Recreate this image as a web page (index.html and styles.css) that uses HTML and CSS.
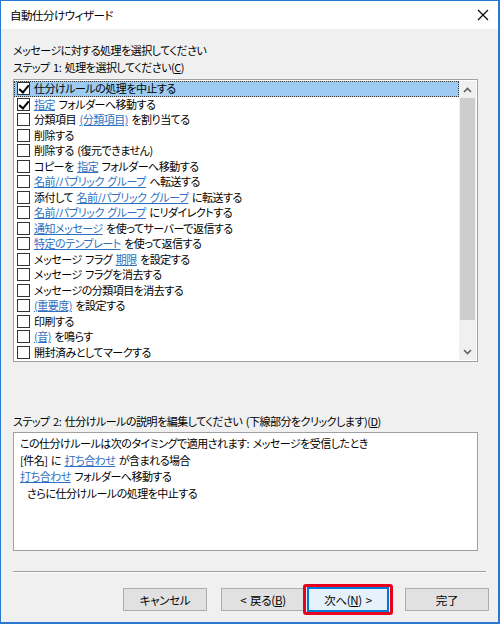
FILE: index.html
```html
<!DOCTYPE html>
<html lang="ja">
<head>
<meta charset="utf-8">
<link rel="stylesheet" href="styles.css">
</head>
<body>
<div class="window">
  <div class="titlebar">
    <span class="title">自動仕分けウィザード</span>
    <svg class="close" width="12" height="12" viewBox="0 0 12 12"><path d="M1 1L11 11M11 1L1 11" stroke="#000" stroke-width="1.1" fill="none"/></svg>
  </div>
  <div class="content">
    <div class="label l1">メッセージに対する処理を選択してください</div>
    <div class="label">ステップ 1: 処理を選択してください(<u>C</u>)</div>
    <div class="listbox">
      <ul class="items">
        <li class="item selected"><span class="cb checked"></span><span>仕分けルールの処理を中止する</span></li>
        <li class="item"><span class="cb checked"></span><span><a>指定</a> フォルダーへ移動する</span></li>
        <li class="item"><span class="cb"></span><span>分類項目 <a>(分類項目)</a> を割り当てる</span></li>
        <li class="item"><span class="cb"></span><span>削除する</span></li>
        <li class="item"><span class="cb"></span><span>削除する (復元できません)</span></li>
        <li class="item"><span class="cb"></span><span>コピーを <a>指定</a> フォルダーへ移動する</span></li>
        <li class="item"><span class="cb"></span><span><a>名前/パブリック グループ</a> へ転送する</span></li>
        <li class="item"><span class="cb"></span><span>添付して <a>名前/パブリック グループ</a> に転送する</span></li>
        <li class="item"><span class="cb"></span><span><a>名前/パブリック グループ</a> にリダイレクトする</span></li>
        <li class="item"><span class="cb"></span><span><a>通知メッセージ</a> を使ってサーバーで返信する</span></li>
        <li class="item"><span class="cb"></span><span><a>特定のテンプレート</a> を使って返信する</span></li>
        <li class="item"><span class="cb"></span><span>メッセージ フラグ <a>期限</a> を設定する</span></li>
        <li class="item"><span class="cb"></span><span>メッセージ フラグを消去する</span></li>
        <li class="item"><span class="cb"></span><span>メッセージの分類項目を消去する</span></li>
        <li class="item"><span class="cb"></span><span><a>(重要度)</a> を設定する</span></li>
        <li class="item"><span class="cb"></span><span>印刷する</span></li>
        <li class="item"><span class="cb"></span><span><a>(音)</a> を鳴らす</span></li>
        <li class="item"><span class="cb"></span><span>開封済みとしてマークする</span></li>
      </ul>
      <div class="scrollbar">
        <div class="arrow">
          <svg width="9" height="6" viewBox="0 0 9 6"><path d="M1 5L4.5 1.5L8 5" stroke="#606060" stroke-width="1.6" fill="none"/></svg>
        </div>
        <div class="thumb"></div>
        <div class="track"></div>
        <div class="arrow">
          <svg width="9" height="6" viewBox="0 0 9 6"><path d="M1 1L4.5 4.5L8 1" stroke="#606060" stroke-width="1.6" fill="none"/></svg>
        </div>
      </div>
    </div>
    <div class="label l3">ステップ 2: 仕分けルールの説明を編集してください (下線部分をクリックします)(<u>D</u>)</div>
    <div class="descbox">
      <div class="dline">この仕分けルールは次のタイミングで適用されます: メッセージを受信したとき</div>
      <div class="dline">[件名] に <a>打ち合わせ</a> が含まれる場合</div>
      <div class="dline"><a>打ち合わせ</a> フォルダーへ移動する</div>
      <div class="dline indent">さらに仕分けルールの処理を中止する</div>
    </div>
    <div class="separator"></div>
    <div class="buttons">
      <button class="btn">キャンセル</button>
      <button class="btn">&lt; 戻る(<u>B</u>)</button>
      <span class="highlight"><button class="btn focused">次へ(<u>N</u>) &gt;</button></span>
      <button class="btn">完了</button>
    </div>
  </div>
</div>
</body>
</html>
```
FILE: styles.css
```css
* { box-sizing: border-box; }
html, body { margin: 0; padding: 0; }
body {
  width: 500px;
  height: 624px;
  font-family: "Noto Sans CJK JP", "Noto Sans", sans-serif;
  font-size: 11px;
  letter-spacing: -0.5px;
  word-spacing: 1.5px;
  font-feature-settings: "palt";
  color: #000;
}
.window {
  width: 500px;
  height: 624px;
  border: 1px solid #2b78cf;
  border-right-width: 2px;
  border-bottom-width: 2px;
  background: #f0f0f0;
  display: flex;
  flex-direction: column;
}
.titlebar {
  height: 28px;
  background: #fff;
  display: flex;
  align-items: center;
  justify-content: space-between;
  padding: 0 9px 0 9px;
}
.title { font-size: 11.5px; line-height: 16px; }
.content {
  padding: 0 0 0 12px;
  display: flex;
  flex-direction: column;
}
.label { line-height: 17px; height: 17px; white-space: nowrap; }
.l1 { margin-top: 13px; }
.l3 { margin-top: 49px; height: 21px; line-height: 21px; }
u { text-decoration: underline; text-underline-offset: 1px; }
a { color: #2f6fc0; text-decoration: underline; text-underline-offset: 1px; text-decoration-color: #2f6fc0; }
.listbox {
  margin-top: 3px;
  width: 465px;
  height: 283px;
  border: 1px solid #a0a0a0;
  background: #fff;
  display: flex;
  padding: 1px 1px 1px 0;
}
.items {
  list-style: none;
  margin: 0;
  padding: 0;
  flex: 1;
}
.item {
  height: 15.5px;
  line-height: 15px;
  display: flex;
  align-items: center;
  padding-left: 2px;
  white-space: nowrap;
}
.item.selected {
  background: #9dcbf2;
  outline: 1px dotted #333;
  outline-offset: -1px;
}
.cb {
  width: 13px;
  height: 13px;
  border: 1px solid #333;
  background: #fff;
  margin-left: 1px;
  margin-right: 4px;
  flex: none;
  position: relative;
}
.cb.checked::after {
  content: "";
  position: absolute;
  left: 3px;
  top: 0px;
  width: 4px;
  height: 8px;
  border-right: 2px solid #000;
  border-bottom: 2px solid #000;
  transform: rotate(40deg);
}
.scrollbar {
  width: 17px;
  display: flex;
  flex-direction: column;
  background: #f0f0f0;
}
.arrow {
  height: 17px;
  display: flex;
  align-items: center;
  justify-content: center;
}
.thumb {
  height: 222px;
  background: #cdcdcd;
  margin: 0 1px;
}
.track { flex: 1; }
.descbox {
  width: 465px;
  height: 119px;
  border: 1px solid #a0a0a0;
  background: #fff;
  padding: 2px 6px;
}
.dline { line-height: 16.5px; height: 16.5px; white-space: nowrap; }
.indent { padding-left: 7px; }
.separator {
  margin-top: 20px;
  width: 473px;
  height: 2px;
  border-top: 1px solid #a0a0a0;
  border-bottom: 1px solid #fff;
}
.buttons {
  margin-top: 11px;
  display: flex;
  align-items: center;
  padding-left: 110px;
}
.btn {
  font-family: inherit;
  font-size: 11.5px;
  letter-spacing: -0.3px;
  word-spacing: 1.5px;
  font-feature-settings: "palt";
  width: 84px;
  height: 23px;
  background: #e1e1e1;
  border: 1px solid #adadad;
  padding: 0;
  margin: 0;
  color: #000;
  line-height: 20px;
}
.buttons > .btn:nth-child(2) { margin-left: 14px; }
.highlight {
  margin-left: -2px;
  border: 3px solid #e8001c;
  border-radius: 3px;
  padding: 0 1px;
  display: flex;
}
.btn.focused {
  width: 82px;
  height: 25px;
  border: 2px solid #0078d7;
  background: #e5f1fb;
}
.buttons > .btn:last-child { margin-left: 12px; }
```
